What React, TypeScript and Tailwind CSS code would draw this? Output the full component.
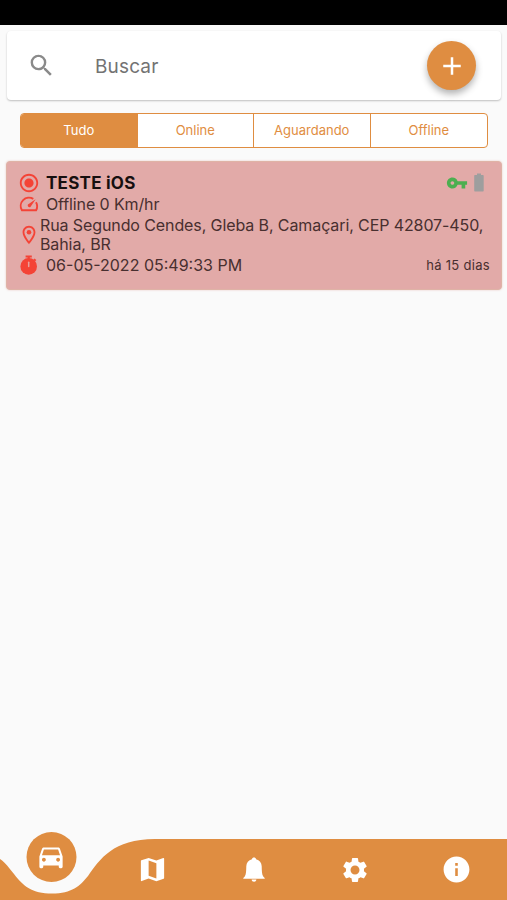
import React, { useState } from 'react'
import {
  MdAdd,
  MdDirectionsCar,
  MdInfo,
  MdMap,
  MdOutlineLocationOn,
  MdRadioButtonChecked,
  MdSearch,
  MdSettings,
  MdVpnKey,
} from 'react-icons/md'

const filters = ['Tudo', 'Online', 'Aguardando', 'Offline']

function SpeedIcon() {
  return (
    <svg width="22" height="22" viewBox="0 0 22 22" fill="none" stroke="currentColor" strokeWidth="1.900">
      <path d="M15.300 5.900A8.300 8.300 0 0 0 3.900 17.300H18.100A8.300 8.300 0 0 0 18 9.200" />
      <path d="M17.600 6.300L12.600 13.800C11.500 15.200 9 13.600 9.900 11.600Z" fill="currentColor" stroke="none" />
    </svg>
  )
}

function StopwatchIcon() {
  return (
    <svg width="20" height="20" viewBox="0 0 20 20" fill="currentColor">
      <path d="M6.600 0.500h6.200v2h-2v1.200h-2.200V2.500h-2z" />
      <path d="M15.500 3.400l1.800 1.700-1.300 1.300-1.800-1.700z" />
      <circle cx="9.700" cy="11.400" r="8.300" />
      <path d="M9.700 7.200v4.200" stroke="#e8a09c" strokeWidth="1.500" strokeLinecap="round" />
    </svg>
  )
}

function BatteryIcon() {
  return (
    <svg width="10" height="19" viewBox="0 0 10 19" fill="currentColor">
      <path d="M3 0.500h4v1.500h1.700c.6 0 1 .4 1 1v14.500c0 .6-.4 1-1 1H1.200c-.6 0-1-.4-1-1V3c0-.6.4-1 1-1H3z" />
    </svg>
  )
}

function BellIcon() {
  return (
    <svg width="24" height="28" viewBox="0 0 24 28" fill="currentColor">
      <path d="M12 1.500c1.100 0 1.900.7 2.100 1.700 3.400.9 5.500 3.400 5.600 7.100.1 4.800.2 7.800 1.400 9.900.4.700 1.200 1.200 1.600 1.700v.9H1.300v-.9c.4-.5 1.200-1 1.600-1.700 1.200-2.100 1.300-5.100 1.400-9.900.1-3.700 2.200-6.200 5.600-7.100.2-1 1-1.700 2.100-1.700z" />
      <path d="M9.600 23.600h4.800c-.2 1.400-1.100 2.200-2.400 2.200s-2.200-.8-2.400-2.200z" />
    </svg>
  )
}

function SearchBar() {
  return (
    <div className="mr-[6px] ml-[7px] mt-[6px] flex h-[69px] items-center rounded-[4px] bg-white pr-[25px] pl-[20px] shadow-[0_1px_2px_rgba(0,0,0,0.24)]">
      <MdSearch size={29} className="text-[#8a8a8a]" />
      <span className="ml-[39px] flex-1 pt-[3px] text-[19px] tracking-[0.15px] text-[#737373]">Buscar</span>
      <button className="flex size-[49px] items-center justify-center rounded-full bg-[#df8d41] text-white shadow-[0_4px_7px_rgba(0,0,0,0.3)]">
        <MdAdd size={30} />
      </button>
    </div>
  )
}

function VehicleCard() {
  return (
    <div className="mr-[5px] ml-[6px] mt-[13px] h-[129px] rounded-[4px] border border-[#dfb3a6] bg-[#e2aaa8] pt-[10px] pr-[11px] pl-[11px] text-[16px] text-[#482f2f] shadow-[0_0_2px_rgba(220,140,130,0.5)]">
      <div className="flex h-[21px] items-center">
        <MdRadioButtonChecked size={22} className="text-[#f44336]" />
        <span className="ml-[6px] flex-1 pt-[2px] text-[17px] font-bold tracking-[0.25px] text-[#170f0f]">TESTE iOS</span>
        <MdVpnKey size={22} className="text-[#4caf50]" />
        <span className="mr-[6px] ml-[6px] text-[#9e9e9e]">
          <BatteryIcon />
        </span>
      </div>
      <div className="flex h-[22px] items-center">
        <span className="text-[#f44336]">
          <SpeedIcon />
        </span>
        <span className="ml-[6px] tracking-[-0.12px]">Offline 0 Km/hr</span>
      </div>
      <div className="flex h-[39px] items-center">
        <MdOutlineLocationOn size={22} className="shrink-0 text-[#f44336]" />
        <span className="leading-[19px] tracking-[-0.1px] whitespace-nowrap">
          Rua Segundo Cendes, Gleba B, Camaçari, CEP 42807-450,
          <br />
          Bahia, BR
        </span>
      </div>
      <div className="flex h-[22px] items-center">
        <span className="flex w-[22px] justify-center text-[#f44336]">
          <StopwatchIcon />
        </span>
        <span className="ml-[6px] flex-1">06-05-2022 05:49:33 PM</span>
        <span className="pt-[2px] text-[13px] tracking-[0.3px]">há 15 dias</span>
      </div>
    </div>
  )
}

function BottomNav() {
  return (
    <nav className="relative h-[70px] text-white">
      {/* bar with the notch around the active item */}
      <svg className="absolute inset-0" width="507" height="70" viewBox="0 0 507 70" fill="#df8d41">
        <path d="M0 29C6 33 9 38 14 44C23 56 32 63.500 52 63.500C72 63.500 80 56 88 46C100 29 113 9 155 9H507V70H0Z" />
      </svg>
      <div className="relative grid h-full grid-cols-5">
        <button className="mx-auto mt-[1.500px] flex size-[50px] translate-x-[0.500px] items-center justify-center rounded-full bg-[#df8d41]">
          <MdDirectionsCar size={31} />
        </button>
        <button className="flex items-center justify-center pt-[9px]">
          <MdMap size={31} />
        </button>
        <button className="flex items-center justify-center pt-[9px] pl-[1px]">
          <BellIcon />
        </button>
        <button className="flex items-center justify-center pt-[9px]">
          <MdSettings size={30} />
        </button>
        <button className="flex items-center justify-center pt-[9px]">
          <MdInfo size={31} />
        </button>
      </div>
    </nav>
  )
}

export default function App() {
  const [active, setActive] = useState('Tudo')

  return (
    <div className="flex h-[900px] w-[507px] flex-col overflow-hidden bg-[#fafafa] font-['Inter',sans-serif]">
      <div className="h-[25px] shrink-0 bg-black" />
      <SearchBar />
      <div className="mr-[19px] ml-[20px] mt-[13px] grid h-[35px] grid-cols-4 divide-x divide-[#df8d41] overflow-hidden rounded-[4px] border border-[#df8d41] bg-white text-[13px]">
        {filters.map((filter) => (
          <button
            key={filter}
            onClick={() => setActive(filter)}
            className={filter === active ? 'bg-[#df8d41] text-white' : 'text-[#df8d41]'}
          >
            {filter}
          </button>
        ))}
      </div>
      <VehicleCard />
      <div className="flex-1" />
      <BottomNav />
    </div>
  )
}
